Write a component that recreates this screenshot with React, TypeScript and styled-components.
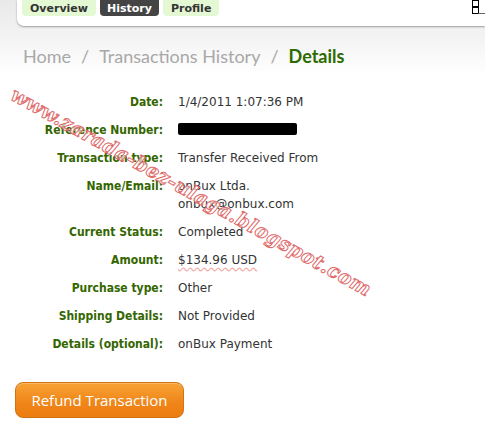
import React from 'react';
import styled, { createGlobalStyle } from 'styled-components';

const GlobalStyle = createGlobalStyle`
  html, body {
    margin: 0;
    padding: 0;
    background: #fff;
  }
  body {
    font-family: "DejaVu Sans", Verdana, sans-serif;
  }
`;

// Whole page with the soft grey fade under the top bar
const Page = styled.div`
  position: relative;
  width: 485px;
  height: 433px;
  overflow: hidden;
  background: linear-gradient(#e9e9e9 0px, #f4f4f4 40px, #ffffff 75px);
`;

// White bar holding the tabs
const TopBar = styled.div`
  margin-left: 17px;
  height: 26px;
  background: #fff;
  border-bottom-left-radius: 7px;
  box-shadow: 0 1px 2px rgba(0, 0, 0, 0.35);
  display: flex;
  align-items: flex-start;
  gap: 4px;
  padding-left: 5px;
  position: relative;
`;

const Tab = styled.div<{ $active?: boolean }>`
  height: 16px;
  padding: 0 ${({ $active }) => ($active ? '7px' : '8px')};
  display: flex;
  align-items: flex-end;
  justify-content: center;
  box-sizing: border-box;
  padding-bottom: 1px;
  border-radius: 0 0 4px 4px;
  background: ${({ $active }) => ($active ? '#444444' : '#e4f8d3')};
  color: ${({ $active }) => ($active ? '#ffffff' : '#333333')};
  font-family: "DejaVu Sans", Verdana, sans-serif;
  font-weight: bold;
  font-size: 11px;
  line-height: 13px;
`;

// Little window-like squares at the top right
const Corner = styled.svg`
  position: absolute;
  right: 0;
  top: 0;
`;

const Crumbs = styled.div`
  padding: 14px 0 0 23px;
  height: 32px;
  display: flex;
  align-items: center;
  gap: 10px;
  font-family: Lato, "Open Sans", sans-serif;
  font-size: 18px;
  color: #a8a8a8;
`;

const Crumb = styled.span<{ $current?: boolean }>`
  color: ${({ $current }) => ($current ? '#2d6b00' : '#a8a8a8')};
  font-weight: ${({ $current }) => ($current ? 700 : 400)};
`;

// Label / value grid
const Details = styled.div`
  display: grid;
  grid-template-columns: 163px auto;
  column-gap: 15px;
  row-gap: 10px;
  margin-top: 21px;
`;

const Label = styled.div`
  text-align: right;
  color: #336600;
  font-family: "DejaVu Sans Condensed", "DejaVu Sans", Verdana, sans-serif;
  font-stretch: condensed;
  font-weight: bold;
  font-size: 12px;
  line-height: 18px;
`;

const Value = styled.div`
  color: #333;
  font-family: "DejaVu Sans", Verdana, sans-serif;
  font-size: 12px;
  line-height: 18px;
`;

const Redacted = styled.div`
  width: 119px;
  height: 12px;
  margin: 2px 0 4px;
  background: #000;
  border-radius: 2px;
`;

const Amount = styled.span`
  text-decoration: underline wavy #f2a6a6;
  text-underline-offset: 3px;
`;

const ButtonRow = styled.div`
  padding: 29px 0 0 15px;
`;

const RefundButton = styled.button`
  width: 169px;
  height: 36px;
  border: 1px solid #d2740f;
  border-radius: 8px;
  background: linear-gradient(#f8a235, #ef8518 60%, #ec7c10);
  color: #fff;
  font-family: "Open Sans", sans-serif;
  font-size: 15px;
  padding: 0;
  box-shadow: inset 0 1px 0 rgba(255, 255, 255, 0.25);
`;

// Blog watermark stamped across the screenshot
const Watermark = styled.div`
  position: absolute;
  left: 18px;
  top: 83px;
  transform-origin: 0 0;
  transform: rotate(29deg);
  font-family: "DejaVu Serif", serif;
  font-style: italic;
  font-weight: bold;
  font-size: 19.5px;
  letter-spacing: 0.4px;
  color: rgba(255, 255, 255, 0.65);
  -webkit-text-stroke: 1px #e06a6a;
  white-space: nowrap;
  pointer-events: none;
`;

const rows: { label: string; value: React.ReactNode }[] = [
  { label: 'Date:', value: '1/4/2011 1:07:36 PM' },
  { label: 'Reference Number:', value: <Redacted /> },
  { label: 'Transaction type:', value: 'Transfer Received From' },
  { label: 'Name/Email:', value: <>onBux Ltda.<br />onbux@onbux.com</> },
  { label: 'Current Status:', value: 'Completed' },
  { label: 'Amount:', value: <Amount>$134.96 USD</Amount> },
  { label: 'Purchase type:', value: 'Other' },
  { label: 'Shipping Details:', value: 'Not Provided' },
  { label: 'Details (optional):', value: 'onBux Payment' },
];

const App: React.FC = () => {
  return (
    <Page>
      <GlobalStyle />
      <TopBar>
        <Tab>Overview</Tab>
        <Tab $active>History</Tab>
        <Tab>Profile</Tab>
        <Corner width="14" height="16" viewBox="0 0 14 16">
          <rect x="1.5" y="0.5" width="6" height="6" fill="#fff" stroke="#000" />
          <rect x="1.5" y="7.5" width="6" height="6" fill="#fff" stroke="#000" />
          <line x1="7.5" y1="13.5" x2="14" y2="13.5" stroke="#666" />
        </Corner>
      </TopBar>

      <Crumbs>
        <Crumb>Home</Crumb>
        <span>/</span>
        <Crumb>Transactions History</Crumb>
        <span>/</span>
        <Crumb $current>Details</Crumb>
      </Crumbs>

      <Details>
        {rows.map(r => (
          <React.Fragment key={r.label}>
            <Label>{r.label}</Label>
            <Value>{r.value}</Value>
          </React.Fragment>
        ))}
      </Details>

      <ButtonRow>
        <RefundButton>Refund Transaction</RefundButton>
      </ButtonRow>

      <Watermark>www.zarada-bez-ulaga.blogspot.com</Watermark>
    </Page>
  );
};

export default App;
